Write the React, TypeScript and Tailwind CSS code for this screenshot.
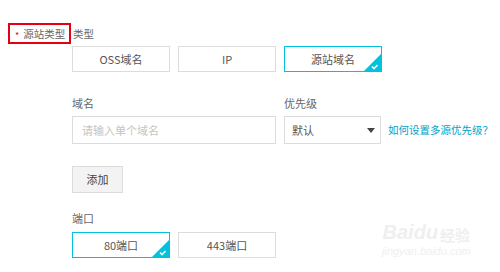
const font = { fontFamily: '"Noto Sans CJK SC", "Noto Sans", sans-serif' }

function Choice({ label, active }: { label: string; active?: boolean }) {
  return (
    <div
      className={
        'relative flex h-[26px] w-[98px] shrink-0 items-center justify-center border text-[11px] text-[#555] ' +
        (active ? 'border-[#00c1de]' : 'border-[#dcdcdc]')
      }
    >
      {label}
      {active && (
        <svg className="absolute bottom-0 right-0" width="17" height="17" viewBox="0 0 17 17">
          <path d="M17 0 L17 17 L0 17 Z" fill="#00c1de" />
          <path d="M8 12.5 L10 14.5 L13.5 11" stroke="#fff" strokeWidth="1.6" fill="none" />
        </svg>
      )}
    </div>
  )
}

export default function App() {
  return (
    <div className="relative h-[272px] w-[500px] overflow-hidden whitespace-nowrap bg-white pl-[8px] pt-[23px]" style={font}>
      <div className="flex items-center text-[10.5px] text-[#666]">
        <div className="flex h-[21px] w-[63px] shrink-0 items-center border-2 border-[#e60012] pl-[5px]">
          <span className="mr-[4px] translate-y-[2px] text-[9px] leading-none text-[#e60012]">*</span>
          <span>源站类型</span>
        </div>
        <span className="ml-[2px]">类型</span>
      </div>

      <div className="ml-[64px] mt-[2px] flex gap-2">
        <Choice label="OSS域名" />
        <Choice label="IP" />
        <Choice label="源站域名" active />
      </div>

      <div className="ml-[64px] mt-[23px] flex gap-2">
        <div className="w-[204px] shrink-0">
          <div className="mb-[4px] h-[17px] text-[11px] leading-[17px] text-[#666]">域名</div>
          <div className="flex h-[28px] items-center border border-[#dcdcdc] px-[9px] text-[11px] text-[#c4c4c4]">
            请输入单个域名
          </div>
        </div>
        <div>
          <div className="mb-[4px] h-[17px] text-[11px] leading-[17px] text-[#666]">优先级</div>
          <div className="flex items-center">
            <div className="flex h-[28px] w-[97px] shrink-0 items-center justify-between border border-[#dcdcdc] pl-[7px] pr-[5px] text-[11px] text-[#555]">
              <span>默认</span>
              <svg width="8" height="5" viewBox="0 0 8 5">
                <path d="M0 0 L8 0 L4 5 Z" fill="#444" />
              </svg>
            </div>
            <span className="ml-[7px] text-[10.5px] text-[#00a2ca]">如何设置多源优先级？</span>
          </div>
        </div>
      </div>

      <div className="ml-[64px] mt-[22px] flex h-[27px] w-[51px] items-center justify-center border border-[#dcdcdc] bg-[#f3f3f3] text-[11px] text-[#444]">
        添加
      </div>

      <div className="mb-[5px] ml-[64px] mt-[17px] h-[17px] text-[11px] leading-[17px] text-[#666]">端口</div>
      <div className="ml-[64px] flex gap-2">
        <Choice label="80端口" active />
        <Choice label="443端口" />
      </div>

      <div className="pointer-events-none absolute left-[382px] top-[222px] flex flex-col items-center text-[#efefef]">
        <div className="flex items-end">
          <span className="text-[20px] font-bold italic leading-none" style={{ fontFamily: '"Liberation Sans", sans-serif' }}>
            Bai
          </span>
          <span className="text-[20px] font-bold italic leading-none" style={{ fontFamily: '"Liberation Sans", sans-serif' }}>
            du
          </span>
          <span className="ml-[2px] text-[15px] font-bold leading-none">经验</span>
        </div>
        <span className="mt-[4px] text-[11px] italic leading-none" style={{ fontFamily: '"Liberation Sans", sans-serif' }}>
          jingyan.baidu.com
        </span>
      </div>
    </div>
  )
}
